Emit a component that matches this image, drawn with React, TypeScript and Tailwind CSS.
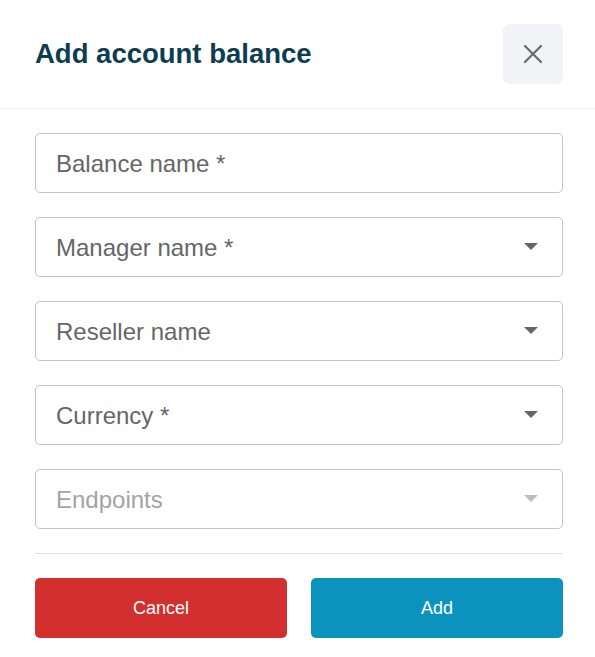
import React from "react";

const font = { fontFamily: '"Liberation Sans", Arial, sans-serif' };

function Caret({ light }: { light?: boolean }) {
  return (
    <svg width="14" height="8" viewBox="0 0 14 8" className="shrink-0">
      <path d="M0 0 L14 0 L7 7 Z" fill={light ? "#bdbdbd" : "#666666"} />
    </svg>
  );
}

function Field({ label, select, disabled }: { label: string; select?: boolean; disabled?: boolean }) {
  return (
    <div className="flex h-[60px] items-center justify-between rounded-[5px] border border-[#c4c4c4] bg-white pl-[20px] pr-[24px]">
      <span className={`mt-[2px] text-[24px] leading-none ${disabled ? "text-[#a3a3a3]" : "text-[#666666]"}`}>{label}</span>
      {select && <Caret light={disabled} />}
    </div>
  );
}

export default function App() {
  return (
    <div className="h-[657px] w-[595px] bg-white" style={font}>
      <div className="flex h-[109px] items-start justify-between border-b border-[#eef0f2] pl-[35px] pr-[32px] pt-[24px]">
        <h1 className="mt-[16px] text-[27.5px] font-bold leading-none text-[#0c3d50]">Add account balance</h1>
        <button className="flex h-[60px] w-[60px] items-center justify-center rounded-[7px] bg-[#f1f3f7]">
          <svg width="20" height="20" viewBox="0 0 20 20">
            <path d="M2 2 L18 18 M18 2 L2 18" stroke="#6b6b6b" strokeWidth="2.2" strokeLinecap="round" />
          </svg>
        </button>
      </div>
      <div className="flex flex-col gap-[24px] pl-[35px] pr-[32px] pt-[24px]">
        <Field label="Balance name *" />
        <Field label="Manager name *" select />
        <Field label="Reseller name" select />
        <Field label="Currency *" select />
        <Field label="Endpoints" select disabled />
      </div>
      <div className="ml-[35px] mr-[32px] mt-[24px] border-t border-[#e0e0e0]" />
      <div className="grid grid-cols-2 gap-[24px] pl-[35px] pr-[32px] pt-[24px]">
        <button className="h-[60px] rounded-[5px] bg-[#d32f2f] text-[18px] text-white">Cancel</button>
        <button className="h-[60px] rounded-[5px] bg-[#0b93bd] text-[18px] text-white">Add</button>
      </div>
    </div>
  );
}
